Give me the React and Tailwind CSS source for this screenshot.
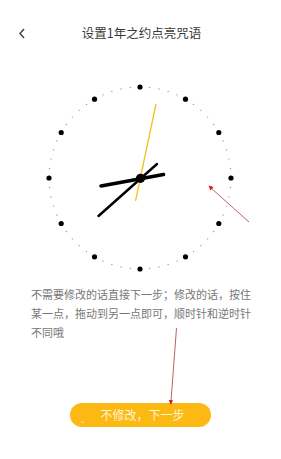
import React from 'react';

const Clock = () => {
  const cx = 100;
  const cy = 100;
  const r = 91;
  const ticks = [];
  for (let i = 0; i < 60; i++) {
    const a = (i * 6 * Math.PI) / 180;
    const x = cx + r * Math.sin(a);
    const y = cy - r * Math.cos(a);
    if (i % 5 === 0) {
      ticks.push(<circle key={i} cx={x} cy={y} r="2.6" fill="#000" />);
    } else {
      ticks.push(<circle key={i} cx={x} cy={y} r="0.7" fill="#9a9a9a" />);
    }
  }
  // clock sits at page offset (40, 78)
  return (
    <svg width="200" height="200" viewBox="0 0 200 200">
      {ticks}
      <line x1="61" y1="108" x2="123.5" y2="96.5" stroke="#000" strokeWidth="3.6" strokeLinecap="round" />
      <line x1="58.5" y1="138" x2="117" y2="86" stroke="#000" strokeWidth="2.4" strokeLinecap="round" />
      <line x1="116" y1="26" x2="95.5" y2="123" stroke="#f5c024" strokeWidth="1.3" />
      <circle cx="100.5" cy="100.3" r="4.6" fill="#000" />
    </svg>
  );
};

const App = () => {
  return (
    <div
      className="relative w-[281px] h-[459px] bg-white overflow-hidden"
      style={{ fontFamily: '"Noto Sans CJK SC", "Noto Sans", sans-serif' }}
    >
      <div className="relative flex items-center justify-center h-[66px]">
        <svg className="absolute left-[18px] top-[28px]" width="8" height="11" viewBox="0 0 8 11">
          <path d="M6 1 L2 5.5 L6 10" fill="none" stroke="#444" strokeWidth="1.5" />
        </svg>
        <h1 className="text-[12.5px] text-[#3a3a3a] pl-[2px]">设置1年之约点亮咒语</h1>
      </div>

      <div className="pl-[40px] pt-[12px]">
        <Clock />
      </div>

      <p className="mt-[7px] ml-[31px] w-[226px] text-[11px] leading-[19px] text-[#777]">
        不需要修改的话直接下一步；修改的话，按住某一点，拖动到另一点即可，顺时针和逆时针不同哦
      </p>

      <div className="mt-[61px] flex justify-center">
        <button className="relative w-[141px] h-[24px] rounded-full bg-[#fdb913] text-[12px] text-[#fff3d6] pl-[4px]">
          不修改，下一步
          <span className="absolute left-[11px] top-[11px] text-[8px] leading-none text-white">ˬ</span>
        </button>
      </div>

      <svg className="absolute left-0 top-0 pointer-events-none" width="281" height="459" viewBox="0 0 281 459">
        <line x1="249" y1="222" x2="211" y2="188" stroke="#a83a3a" strokeWidth="0.8" />
        <path d="M208.5 185.5 L213.5 187 L210.5 190.5 Z" fill="#d01818" />
        <line x1="176.5" y1="328" x2="171" y2="401" stroke="#a83a3a" strokeWidth="0.8" />
        <path d="M170.8 405 L168.8 400 L173 400.3 Z" fill="#d01818" />
      </svg>
    </div>
  );
};

export default App;
